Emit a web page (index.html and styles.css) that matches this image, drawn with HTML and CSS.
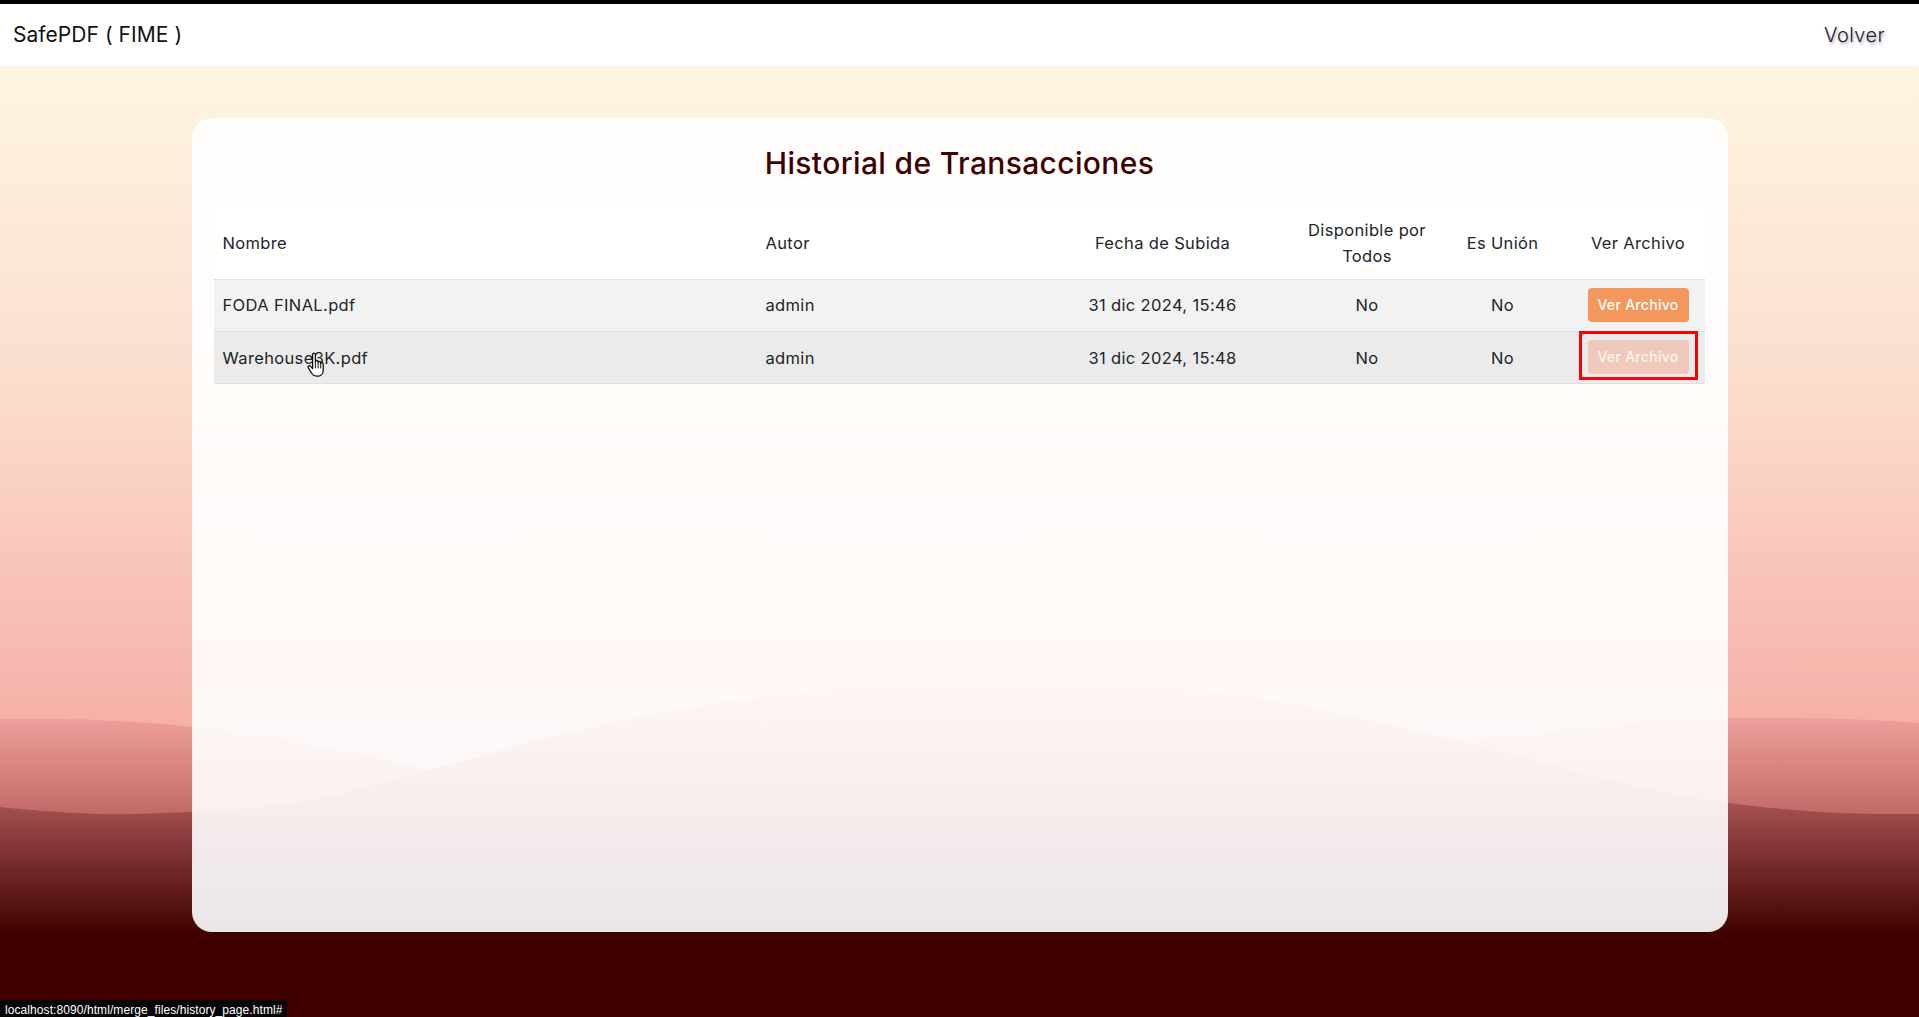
FILE: index.html
```html
<!DOCTYPE html>
<html lang="en">
<head>
    <meta charset="UTF-8">
    <meta name="viewport" content="width=device-width, initial-scale=1.0">
    <title>Historial de Transacciones</title>
    <link rel="stylesheet" href="styles.css">
</head>
<body>
    <!-- Background waves -->
    <svg class="waves" viewBox="0 0 1919 1017" preserveAspectRatio="none" aria-hidden="true">
        <defs>
            <linearGradient id="backFill" gradientUnits="userSpaceOnUse" x1="0" y1="718" x2="0" y2="935">
                <stop offset="0" stop-color="#ef9f9b"/>
                <stop offset="0.44" stop-color="#c26a68"/>
                <stop offset="1" stop-color="#400000"/>
            </linearGradient>
            <linearGradient id="frontFill" gradientUnits="userSpaceOnUse" x1="0" y1="680" x2="0" y2="935">
                <stop offset="0" stop-color="#f2aca0"/>
                <stop offset="0.5" stop-color="#a34f4f"/>
                <stop offset="1" stop-color="#400000"/>
            </linearGradient>
        </defs>
        <path fill="url(#backFill)" d="M0 719C70 718 140 721 192 727C280 738 360 752 429 770C480 783 520 792 551 800C650 828 800 860 960 862C1020 860 1090 835 1144 820C1200 805 1250 793 1297 782C1350 769 1410 755 1468 743C1510 735 1540 733 1572 730C1640 722 1700 718 1756 718C1820 718 1870 719 1919 723V1017H0Z"/>
        <path fill="url(#frontFill)" d="M0 807C60 813 100 815 135 814C230 812 300 806 343 793C380 783 400 778 429 770C490 754 550 736 612 723C680 708 740 699 796 693C850 686 900 681 960 680C1040 679 1100 682 1144 685C1190 689 1220 692 1254 697C1330 710 1400 727 1468 743C1560 767 1650 793 1729 803C1790 811 1840 814 1880 814C1895 814 1910 814 1919 814V1017H0Z"/>
    </svg>

    <header class="topbar">
        <a class="brand" href="#">SafePDF ( FIME )</a>
        <a class="back-link" href="#">Volver</a>
    </header>

    <main class="history-card">
        <h1 class="history-title">Historial de Transacciones</h1>
        <table class="history-table">
            <colgroup>
                <col class="col-name">
                <col class="col-author">
                <col class="col-date">
                <col class="col-public">
                <col class="col-union">
                <col class="col-action">
            </colgroup>
            <thead>
                <tr>
                    <th>Nombre</th>
                    <th>Autor</th>
                    <th class="center">Fecha de Subida</th>
                    <th class="center">Disponible por Todos</th>
                    <th class="center">Es Unión</th>
                    <th class="center">Ver Archivo</th>
                </tr>
            </thead>
            <tbody>
                <tr>
                    <td>FODA FINAL.pdf</td>
                    <td>admin</td>
                    <td class="center">31 dic 2024, 15:46</td>
                    <td class="center">No</td>
                    <td class="center">No</td>
                    <td class="center"><a class="view-btn" href="#">Ver Archivo</a></td>
                </tr>
                <tr>
                    <td>
                        <span class="pointer-wrap">Warehouse3K.pdf
                            <svg class="hand-cursor" viewBox="0 0 18 26" aria-hidden="true">
                                <path fill="#fff" stroke="#111" stroke-width="1.3" stroke-linejoin="round" d="M5.6 2.4c0-1.8 2.8-1.8 2.8 0v7.2c.2-1.5 2.6-1.5 2.7 0v.9c.2-1.4 2.5-1.4 2.6 0v1c.3-1.2 2.5-1.1 2.5.4v6.3c0 3.500-2.400 6-5.800 6H9.500c-2.200 0-3.600-1-4.700-2.700L1.300 15.900c-.9-1.500 1-2.900 2.300-1.500l2 2.200z"/>
                                <path fill="none" stroke="#111" stroke-width="1" d="M8.400 10v6.400M11.100 10.500v5.900M13.700 11.500v4.900"/>
                            </svg>
                        </span>
                    </td>
                    <td>admin</td>
                    <td class="center">31 dic 2024, 15:48</td>
                    <td class="center">No</td>
                    <td class="center">No</td>
                    <td class="center cell-action">
                        <span class="btn-highlight"><a class="view-btn view-btn-hover" href="#">Ver Archivo</a></span>
                    </td>
                </tr>
            </tbody>
        </table>
    </main>

    <div class="status-bar">localhost:8090/html/merge_files/history_page.html#</div>
</body>
</html>
```

FILE: styles.css
```css
/* Global Styles */
* {
    margin: 0;
    padding: 0;
    box-sizing: border-box;
    font-family: Inter, "Noto Sans", sans-serif;
}

html, body {
    height: 100%;
}

body {
    position: relative;
    overflow: hidden;
    display: flex;
    flex-direction: column;
    background: linear-gradient(#fef5e3 66px, #fbdccb 400px, #f6b0a8 720px, #f6b0a8 100%);
    color: #212529;
}

.waves {
    position: absolute;
    top: 0;
    left: 0;
    width: 100%;
    height: 100%;
}

/* Top bar */
.topbar {
    position: relative;
    height: 66px;
    flex-shrink: 0;
    display: flex;
    align-items: center;
    justify-content: space-between;
    padding: 0 34px 0 13px;
    background-color: white;
    border-top: 4px solid black;
}

.brand {
    color: #111;
    font-size: 21px;
    letter-spacing: 0.05px;
    line-height: 24px;
    text-decoration: none;
}

.back-link {
    color: #2a2030;
    font-size: 20px;
    font-weight: 300;
    letter-spacing: 0.4px;
    text-decoration: none;
    text-shadow: 1px 2px 3px rgba(60, 60, 90, 0.45);
}

/* Card */
.history-card {
    position: relative;
    width: 1536px;
    height: 814px;
    margin: 52px auto 0;
    padding: 22px;
    border-radius: 20px;
    background-color: rgba(255, 255, 255, 0.9);
}

.history-title {
    height: 68px;
    color: #400000;
    font-size: 30px;
    font-weight: 500;
    letter-spacing: 0.36px;
    line-height: 46px;
    text-align: center;
}

/* Table */
.history-table {
    width: 1491px;
    table-layout: fixed;
    border-collapse: collapse;
    font-size: 16.5px;
    letter-spacing: 0.35px;
    color: #212529;
}

.col-name { width: 543px; }
.col-author { width: 268px; }
.col-date { width: 276px; }
.col-public { width: 133px; }
.col-union { width: 138px; }
.col-action { width: 133px; }

.history-table th {
    height: 71px;
    padding: 0 9px;
    font-weight: 400;
    line-height: 26px;
    text-align: left;
    background-color: white;
    border-bottom: 1px solid #dee2e6;
}

.history-table th.center {
    padding: 0 4px;
}

.history-table td {
    height: 52px;
    padding: 0 9px;
    border-bottom: 1px solid #dee2e6;
}

.history-table tbody tr:nth-child(1) td {
    background-color: #f2f2f2;
}

.history-table tbody tr:nth-child(2) td {
    padding-top: 2px;
    background-color: #ebebeb;
}

.history-table tbody tr:nth-child(2) td.cell-action {
    padding-top: 0;
}

.history-table .center {
    text-align: center;
}

.view-btn {
    display: inline-block;
    width: 101px;
    height: 34px;
    border-radius: 4px;
    background-color: #f4975c;
    color: white;
    font-size: 14px;
    font-weight: 500;
    letter-spacing: 0.3px;
    line-height: 33px;
    text-align: center;
    text-decoration: none;
    vertical-align: middle;
}

.view-btn-hover {
    background-color: #f0c9bd;
    color: #fdf3f0;
}

/* Red annotation round the hovered button */
.btn-highlight {
    position: relative;
    display: inline-block;
    vertical-align: middle;
}

.btn-highlight::after {
    content: "";
    position: absolute;
    top: -9px;
    left: -9px;
    right: -9px;
    bottom: -6px;
    border: 3px solid #f00;
}

/* Mouse pointer in the screenshot */
.pointer-wrap {
    position: relative;
}

.hand-cursor {
    position: absolute;
    top: 4px;
    left: 84px;
    width: 18px;
    height: 26px;
}

/* Browser link preview */
.status-bar {
    position: absolute;
    left: 0;
    bottom: 0;
    width: 287px;
    height: 17px;
    padding: 3px 0 0 5px;
    border-top-right-radius: 3px;
    background-color: #050505;
    color: white;
    font-family: "Liberation Sans", Arial, sans-serif;
    font-size: 12px;
    letter-spacing: 0.08px;
    line-height: 14px;
    white-space: nowrap;
}
```
